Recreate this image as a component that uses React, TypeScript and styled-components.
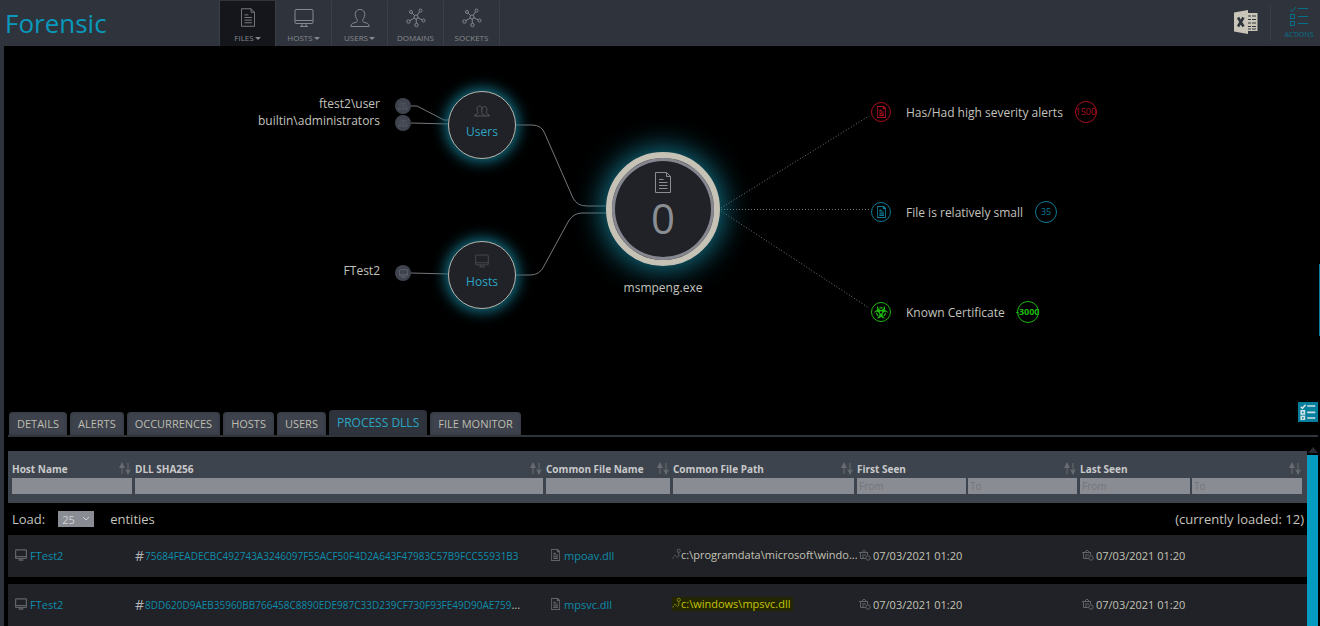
import React from 'react';
import styled, { createGlobalStyle, css } from 'styled-components';
import { FaBiohazard } from 'react-icons/fa';

const GlobalStyle = createGlobalStyle`
  * { box-sizing: border-box; }
  body {
    margin: 0;
    background: #000;
    color: #c4c3be;
    font-family: 'Open Sans', 'Noto Sans', sans-serif;
    font-size: 11px;
    overflow: hidden;
  }
  button, input, select { font-family: inherit; border: 0; border-radius: 0; margin: 0; }
  a { text-decoration: none; }
`;

/* ---------- icons ---------- */

const Svg = styled.svg`
  display: block;
  flex: none;
  fill: none;
  stroke: currentColor;
`;

type IconProps = { w: number; h: number; weight?: number };

const FileIcon = ({ w, h, weight = 1 }: IconProps) => (
  <Svg width={w} height={h} viewBox="0 0 16 21" strokeWidth={weight} aria-hidden="true">
    <path d="M.5.5h11l4 4v16H.5z" />
    <path d="M11.500.5v4h4" />
    <path d="M4 7.500h4.500M4 10.500h8.500M4 13.500h8.500M4 16.500h8.500" />
  </Svg>
);

const MonitorIcon = ({ w, h, weight = 1 }: IconProps) => (
  <Svg width={w} height={h} viewBox="0 0 20 20" strokeWidth={weight} aria-hidden="true">
    <rect x="1" y="1.500" width="18" height="14" rx="1" />
    <path d="M1 12.500h18M8 15.500V18M12 15.500V18M6 18.500h8" />
  </Svg>
);

const UserIcon = ({ w, h }: IconProps) => (
  <Svg width={w} height={h} viewBox="0 0 20 20" aria-hidden="true">
    <path d="M1 18.500c0-2 .6-2.800 2.300-3.400 2.400-.8 4.200-1 4.200-2.400 0-1-.8-1.200-1.500-2.900C4.300 5.500 5.800 1.500 10 1.500s5.700 4 4 8.300c-.7 1.700-1.500 1.900-1.500 2.900 0 1.400 1.800 1.600 4.200 2.400 1.700.6 2.300 1.400 2.300 3.400z" />
  </Svg>
);

const UsersIcon = ({ w, h }: IconProps) => (
  <Svg width={w} height={h} viewBox="0 0 16 13" aria-hidden="true">
    <path d="M.5 11.500c0-2 3.500-1.500 3.500-3.500 0-1-1-1.500-1-3.500C3 2.500 4 1.500 5.500 1.500S8 2.500 8 4.500L7.500 8c0 2 3 1.500 3 3.500z" />
    <path d="M8 5c0-2 1.200-3 2.700-3S13 3.200 13 5c0 1.600-.9 2.300-.9 3.200 0 1.500 3.400 1.300 3.400 3.300h-5" />
  </Svg>
);

const NetworkIcon = ({ w, h }: IconProps) => (
  <Svg width={w} height={h} viewBox="0 0 20 20" aria-hidden="true">
    <circle cx="10" cy="9" r="2" />
    <circle cx="5" cy="4" r="1.500" />
    <circle cx="14.500" cy="2.500" r="1.500" />
    <circle cx="2.500" cy="13.500" r="1.700" />
    <circle cx="17.500" cy="12.500" r="1.500" />
    <circle cx="10.500" cy="17" r="1.700" />
    <path d="M6.200 5.200l2.300 2.300M13.600 3.800l-2.400 3.500M4 12.600l4.200-2.500M16.200 11.900L12 9.800M10.400 15.200L10.200 11" />
  </Svg>
);

const ChecklistIcon = ({ w, h, weight = 1 }: IconProps) => (
  <Svg width={w} height={h} viewBox="0 0 20 20" strokeWidth={weight} aria-hidden="true">
    <path d="M1 3.500l2 2 4-4.500M9 2.500h10M9 10.500h10M9 17.500h10" />
    <rect x="1.500" y="8.500" width="4" height="4" />
    <rect x="1.500" y="15.500" width="4" height="4" />
  </Svg>
);

const ExcelIcon = () => (
  <Svg width="24" height="24" viewBox="0 0 24 24" aria-hidden="true">
    <path d="M14 3h9.500v18H14z" fill="#c9c6b9" stroke="none" />
    <path d="M14 6h8M14 9.500h8M14 13h8M14 16.500h8M14 19h8" stroke="#2f343c" strokeWidth="1.200" />
    <path d="M17.500 5v15" stroke="#c9c6b9" />
    <path d="M0 2.500L14 0v24L0 21.500z" fill="#c9c6b9" stroke="none" />
    <path d="M4 7.500l5.500 9M9.500 7.500l-5.500 9" stroke="#2f343c" strokeWidth="2.600" />
  </Svg>
);

const SortIcon = () => (
  <Svg width="12" height="13" viewBox="0 0 12 13" aria-hidden="true">
    <path d="M3 12V4M9 1v8" />
    <path d="M3 0l3 6H0zM9 13l3-6-3 1.500L6 7z" fill="currentColor" stroke="none" />
  </Svg>
);

const PathIcon = () => (
  <Svg width="9" height="12" viewBox="0 0 10 12" aria-hidden="true">
    <circle cx="7.500" cy="2.500" r="1.800" />
    <path d="M7.500 4.500v4c0 1.600-2 2-2.500.5S3 7 2 8.500L1 11" strokeDasharray="5 1" />
  </Svg>
);

const CalendarIcon = () => (
  <Svg width="12" height="12" viewBox="0 0 12 12" aria-hidden="true">
    <path d="M3 3l2-2 2 2M0 3.500h9M1.500 4v5.500h5M3 6h4M3 8h2M8.500 4v2" />
    <circle cx="9" cy="9" r="2.200" />
  </Svg>
);

/* ---------- top bar ---------- */

const Header = styled.header`
  display: flex;
  align-items: stretch;
  height: 46px;
  background: #2f343c;
`;

const Title = styled.h1`
  width: 219px;
  margin: 0;
  padding-left: 5px;
  color: #0899bd;
  font-size: 26px;
  font-weight: 400;
  line-height: 47px;
`;

const Nav = styled.nav`
  display: flex;
  flex: 1;
  padding-top: 1px;
  border-left: 1px solid #3a3f47;
`;

const NavButton = styled.button<{ $active?: boolean }>`
  display: flex;
  flex-direction: column;
  align-items: center;
  justify-content: space-between;
  width: 56px;
  padding: 7px 0 2px;
  border-right: 1px solid #3a3f47;
  background: ${(p) => (p.$active ? '#15161b' : 'transparent')};
  color: #85888e;
  font-size: 8px;
  line-height: 12px;
`;

const NavLabel = styled.span`
  display: flex;
  align-items: center;
  gap: 1px;
`;

const Caret = styled.span`
  border: 3px solid transparent;
  border-top-color: currentColor;
  border-bottom: 0;
`;

const HeaderTools = styled.div`
  display: flex;
  align-items: center;
`;

const ExportButton = styled.button`
  padding: 0 12px 2px;
  background: transparent;
  border-right: 1px solid #3a3f47;
  height: 36px;
`;

const ActionsButton = styled.button`
  display: flex;
  flex-direction: column;
  align-items: center;
  gap: 4px;
  width: 49px;
  padding: 0 0 0 7px;
  background: transparent;
  color: #06708b;
  font-size: 7px;
  line-height: 10px;
`;

/* ---------- graph ---------- */

const Main = styled.main`
  position: relative;
  border-left: 4px solid #2f343c;
`;

const Graph = styled.section`
  display: flex;
  justify-content: center;
  height: 356px;
`;

const Stage = styled.div`
  position: relative;
  flex: none;
  width: 900px;
  font-size: 12px;
  line-height: 18px;
  white-space: nowrap;
`;

const Links = styled.svg`
  position: absolute;
  inset: 0;
  width: 100%;
  height: 100%;
  fill: none;
  stroke: #74777c;
`;

type Point = { $x: number; $y: number };

const at = css<Point>`
  position: absolute;
  left: ${(p) => p.$x}px;
  top: ${(p) => p.$y}px;
`;

const GroupNode = styled.div<Point>`
  ${at}
  display: flex;
  flex-direction: column;
  align-items: center;
  gap: 5px;
  width: 68px;
  height: 68px;
  padding-top: 12px;
  margin: -34px;
  border: 1px solid #b9b4ad;
  border-radius: 50%;
  background: #202227;
  box-shadow: 0 0 14px 3px #137287;
  color: #54565b;
`;

const GroupName = styled.span`
  color: #2ba5c4;
`;

const FileNode = styled.div<Point>`
  ${at}
  display: flex;
  flex-direction: column;
  align-items: center;
  width: 114px;
  height: 114px;
  margin: -57px;
  padding-top: 14px;
  border: 6px solid #c6c3b6;
  border-radius: 50%;
  background: #202227;
  box-shadow: inset 0 0 0 3px #85868f, 0 0 28px 4px #137287;
  color: #8a8d92;
`;

const Score = styled.span`
  font-size: 42px;
  line-height: 50px;
`;

const FileName = styled.div<Point>`
  ${at}
  width: 160px;
  margin: -9px -80px;
  text-align: center;
`;

const Leaf = styled.div<Point>`
  ${at}
  width: 180px;
  margin: -9px 0 0 -180px;
  text-align: right;
`;

const LeafDot = styled.span<Point>`
  ${at}
  display: flex;
  align-items: center;
  justify-content: center;
  width: 16px;
  height: 16px;
  margin: -8px;
  border-radius: 50%;
  background: #3e434e;
  color: #5d626d;
`;

const Finding = styled.div<Point & { $color: string }>`
  ${at}
  display: flex;
  align-items: center;
  margin-top: -11px;
  height: 22px;
  color: ${(p) => p.$color};
`;

const FindingIcon = styled.span`
  display: flex;
  align-items: center;
  justify-content: center;
  width: 20px;
  height: 20px;
  border: 1px solid currentColor;
  border-radius: 50%;
`;

const FindingText = styled.span`
  padding: 2px 12px 0 15px;
  color: #c4c3be;
`;

const Points = styled.span<{ $bold?: boolean }>`
  display: flex;
  align-items: center;
  justify-content: center;
  width: 22px;
  height: 22px;
  border: 1px solid currentColor;
  border-radius: 50%;
  font-size: 9px;
  font-weight: ${(p) => (p.$bold ? 700 : 400)};
`;

const DrawerHandle = styled.span`
  position: absolute;
  top: 218px;
  right: 0;
  width: 1px;
  height: 72px;
  background: #0a7d9a;
`;

/* ---------- tabs ---------- */

const TabBar = styled.div`
  display: flex;
  align-items: flex-end;
  justify-content: space-between;
  height: 35px;
  margin: 0 2px 14px 4px;
  border-bottom: 2px solid #2f343a;
`;

const TabList = styled.div`
  display: flex;
  align-items: flex-end;
  gap: 3px;
  padding-left: 1px;
`;

const Tab = styled.button<{ $active?: boolean }>`
  height: ${(p) => (p.$active ? 25 : 23)}px;
  padding: 0 8px;
  border-radius: 4px 4px 0 0;
  background: ${(p) => (p.$active ? '#2f343c' : '#3d424c')};
  box-shadow: inset 0 0 3px ${(p) => (p.$active ? '#2b3038' : '#2f343c')};
  color: ${(p) => (p.$active ? '#2ba5c4' : '#bfbdb0')};
  font-size: ${(p) => (p.$active ? 12 : 11)}px;
  white-space: nowrap;
`;

const PanelButton = styled.button`
  display: flex;
  align-items: center;
  justify-content: center;
  align-self: flex-start;
  width: 20px;
  height: 20px;
  padding: 0;
  background: #067f9c;
  color: #d0e2e6;
`;

/* ---------- table ---------- */

const TableArea = styled.section`
  display: flex;
  margin: 0 2px 0 4px;
`;

const Table = styled.table`
  flex: 1;
  min-width: 0;
  width: 100%;
  table-layout: fixed;
  border-spacing: 0;
`;

const Col = styled.col<{ $w?: number }>`
  width: ${(p) => (p.$w ? `${p.$w}px` : 'auto')};
`;

const HeadCell = styled.th`
  height: 52px;
  padding: 8px 0 8px 3px;
  background: #3e444d;
  color: #c8c9cb;
  font-size: 10px;
  font-weight: 700;
  text-align: left;
  vertical-align: top;
  &:first-child { padding-left: 4px; }
  &:last-child { padding-right: 5px; }
`;

const HeadTitle = styled.div`
  display: flex;
  align-items: center;
  justify-content: space-between;
  height: 19px;
  white-space: nowrap;
`;

const SortButton = styled.button`
  padding: 0 1px 1px 0;
  background: transparent;
  color: #686b71;
`;

const Filters = styled.div`
  display: flex;
  gap: 2px;
`;

const FilterInput = styled.input`
  flex: 1;
  min-width: 0;
  height: 16px;
  padding: 0 2px;
  background: #8a8c93;
  color: #202227;
  font-size: 10px;
  &::placeholder { color: #73767a; opacity: 1; }
`;

const LoadCell = styled.td`
  height: 32px;
  padding: 0 3px 0 4px;
  font-size: 13px;
`;

const LoadRow = styled.div`
  display: flex;
  align-items: center;
`;

const SelectWrap = styled.span`
  position: relative;
  display: flex;
  margin: 0 16px 0 13px;
`;

const Select = styled.select`
  width: 36px;
  height: 16px;
  padding: 0 4px;
  appearance: none;
  background: #8a8c93;
  color: #d0d1d3;
  font-size: 11px;
`;

const Chevron = styled(Svg)`
  position: absolute;
  top: 5px;
  right: 4px;
  color: #d0d1d3;
  pointer-events: none;
`;

const LoadedCount = styled.span`
  margin-left: auto;
`;

const Cell = styled.td`
  height: 49px;
  padding: 0 0 2px 3px;
  border-bottom: 7px solid #000;
  background: #202227;
`;

const CellContent = styled.div<{ $indent?: number; $gap?: number }>`
  display: flex;
  align-items: center;
  gap: ${(p) => p.$gap ?? 0}px;
  height: 20px;
  padding-left: ${(p) => p.$indent ?? 0}px;
  color: #606368;
`;

const CellText = styled.span`
  color: #c4c3b6;
  white-space: nowrap;
`;

const CellLink = styled.a<{ $small?: boolean }>`
  color: #0f8caa;
  font-size: ${(p) => (p.$small ? 10 : 11)}px;
`;

const Hash = styled.span`
  padding-right: 1px;
  color: #b4b5b8;
  font-size: 14px;
`;

const PathBox = styled.span`
  display: flex;
  margin-left: -1px;
  padding-right: 3px;
  line-height: 14px;
`;

const Marked = styled(PathBox)`
  background: #242600;
  color: #8c8d10;
  & > ${CellText} { color: #c3c40c; }
`;

const ScrollTrack = styled.div`
  display: flex;
  flex-direction: column;
  align-items: center;
  width: 11px;
`;

const ScrollArrow = styled.span`
  margin: -4px 0 1px;
  border: 5px solid transparent;
  border-top: 0;
  border-bottom: 6px solid #2a2d33;
`;

const ScrollThumb = styled.div`
  flex: 1;
  width: 100%;
  margin-top: 1px;
  background: #069bc0;
`;

/* ---------- data ---------- */

const navItems = [
  { label: 'FILES', icon: <FileIcon w={14} h={19} />, menu: true, active: true },
  { label: 'HOSTS', icon: <MonitorIcon w={20} h={20} />, menu: true },
  { label: 'USERS', icon: <UserIcon w={20} h={20} />, menu: true },
  { label: 'DOMAINS', icon: <NetworkIcon w={20} h={20} /> },
  { label: 'SOCKETS', icon: <NetworkIcon w={20} h={20} /> },
];

const tabs = ['DETAILS', 'ALERTS', 'OCCURRENCES', 'HOSTS', 'USERS', 'PROCESS DLLS', 'FILE MONITOR'];

const columns = [
  { title: 'Host Name', width: 124 },
  { title: 'DLL SHA256' },
  { title: 'Common File Name', width: 127 },
  { title: 'Common File Path', width: 184 },
  { title: 'First Seen', width: 223, range: true },
  { title: 'Last Seen', width: 230, range: true },
];

const rows = [
  {
    host: 'FTest2',
    sha: '75684FEADECBC492743A3246097F55ACF50F4D2A643F47983C57B9FCC55931B3',
    name: 'mpoav.dll',
    path: 'c:\\programdata\\microsoft\\windo...',
    first: '07/03/2021 01:20',
    last: '07/03/2021 01:20',
  },
  {
    host: 'FTest2',
    sha: '8DD620D9AEB35960BB766458C8890EDE987C33D239CF730F93FE49D90AE759',
    more: true,
    name: 'mpsvc.dll',
    path: 'c:\\windows\\mpsvc.dll',
    marked: true,
    first: '07/03/2021 01:20',
    last: '07/03/2021 01:20',
  },
];

export default function App() {
  return (
    <>
      <GlobalStyle />
      <Header>
        <Title>Forensic</Title>
        <Nav>
          {navItems.map((item) => (
            <NavButton key={item.label} $active={item.active}>
              {item.icon}
              <NavLabel>
                {item.label}
                {item.menu && <Caret />}
              </NavLabel>
            </NavButton>
          ))}
        </Nav>
        <HeaderTools>
          <ExportButton aria-label="Export to Excel">
            <ExcelIcon />
          </ExportButton>
          <ActionsButton>
            <ChecklistIcon w={20} h={20} />
            ACTIONS
          </ActionsButton>
        </HeaderTools>
      </Header>

      <Main>
        <Graph>
          <Stage>
            <Links>
              <path d="M199 60h6l27 14h6M199 77l38 1M199 227l38 1" />
              <path d="M304 79h16q10 0 13 9l28 64q4 8 14 8h20" />
              <path d="M304 229h14q10 0 14-9l24-44q5-9 14-9h25" />
              <path
                d="M509 162L657 70M509 163.500H657M509 165L657 262"
                strokeDasharray="1 2"
              />
            </Links>

            <Leaf $x={168} $y={58}>ftest2\user</Leaf>
            <Leaf $x={168} $y={75}>builtin\administrators</Leaf>
            <Leaf $x={168} $y={225}>FTest2</Leaf>
            <LeafDot $x={191} $y={60}><UsersIcon w={10} h={8} /></LeafDot>
            <LeafDot $x={191} $y={77}><UsersIcon w={10} h={8} /></LeafDot>
            <LeafDot $x={191} $y={227}><MonitorIcon w={9} h={9} weight={2} /></LeafDot>

            <GroupNode $x={270} $y={79}>
              <UsersIcon w={16} h={14} />
              <GroupName>Users</GroupName>
            </GroupNode>
            <GroupNode $x={270} $y={229}>
              <MonitorIcon w={16} h={14} />
              <GroupName>Hosts</GroupName>
            </GroupNode>

            <FileNode $x={451} $y={163}>
              <FileIcon w={16} h={21} />
              <Score>0</Score>
            </FileNode>
            <FileName $x={451} $y={242}>msmpeng.exe</FileName>

            <Finding $x={659} $y={66} $color="#a80f20">
              <FindingIcon><FileIcon w={9} h={12} weight={2} /></FindingIcon>
              <FindingText>Has/Had high severity alerts</FindingText>
              <Points>1500</Points>
            </Finding>
            <Finding $x={659} $y={166} $color="#0f7a96">
              <FindingIcon><FileIcon w={9} h={12} weight={2} /></FindingIcon>
              <FindingText>File is relatively small</FindingText>
              <Points>35</Points>
            </Finding>
            <Finding $x={659} $y={266} $color="#1fb80f">
              <FindingIcon><FaBiohazard size={14} aria-hidden="true" /></FindingIcon>
              <FindingText>Known Certificate</FindingText>
              <Points $bold>-3000</Points>
            </Finding>
          </Stage>
        </Graph>
        <DrawerHandle />

        <TabBar>
          <TabList role="tablist">
            {tabs.map((tab) => (
              <Tab
                key={tab}
                role="tab"
                aria-selected={tab === 'PROCESS DLLS'}
                $active={tab === 'PROCESS DLLS'}
              >
                {tab}
              </Tab>
            ))}
          </TabList>
          <PanelButton aria-label="Show actions panel">
            <ChecklistIcon w={16} h={16} weight={2} />
          </PanelButton>
        </TabBar>

        <TableArea>
          <Table>
            <colgroup>
              {columns.map((c) => (
                <Col key={c.title} $w={c.width} />
              ))}
            </colgroup>
            <thead>
              <tr>
                {columns.map((c) => (
                  <HeadCell key={c.title} scope="col">
                    <HeadTitle>
                      {c.title}
                      <SortButton aria-label={`Sort by ${c.title}`}>
                        <SortIcon />
                      </SortButton>
                    </HeadTitle>
                    <Filters>
                      {c.range ? (
                        <>
                          <FilterInput placeholder="From" aria-label={`${c.title} from`} />
                          <FilterInput placeholder="To" aria-label={`${c.title} to`} />
                        </>
                      ) : (
                        <FilterInput aria-label={`Filter ${c.title}`} />
                      )}
                    </Filters>
                  </HeadCell>
                ))}
              </tr>
            </thead>
            <tbody>
              <tr>
                <LoadCell colSpan={6}>
                  <LoadRow>
                    <label htmlFor="page-size">Load:</label>
                    <SelectWrap>
                      <Select id="page-size" defaultValue="25">
                        <option>25</option>
                      </Select>
                      <Chevron width="8" height="6" viewBox="0 0 8 6">
                        <path d="M1 1l3 3 3-3" />
                      </Chevron>
                    </SelectWrap>
                    <span>entities</span>
                    <LoadedCount>(currently loaded: 12)</LoadedCount>
                  </LoadRow>
                </LoadCell>
              </tr>
              {rows.map((row) => (
                <tr key={row.sha}>
                  <Cell>
                    <CellContent $indent={4} $gap={3}>
                      <MonitorIcon w={12} h={12} weight={2} />
                      <CellLink href="#host">{row.host}</CellLink>
                    </CellContent>
                  </Cell>
                  <Cell>
                    <CellContent>
                      <Hash>#</Hash>
                      <CellText>
                        <CellLink href="#hash" $small>{row.sha}</CellLink>
                        {row.more && '...'}
                      </CellText>
                    </CellContent>
                  </Cell>
                  <Cell>
                    <CellContent $indent={5} $gap={4}>
                      <FileIcon w={9} h={12} weight={2} />
                      <CellLink href="#file">{row.name}</CellLink>
                    </CellContent>
                  </Cell>
                  <Cell>
                    <CellContent>
                      <PathBox as={row.marked ? Marked : undefined}>
                        <PathIcon />
                        <CellText>{row.path}</CellText>
                      </PathBox>
                    </CellContent>
                  </Cell>
                  <Cell>
                    <CellContent $indent={2} $gap={2}>
                      <CalendarIcon />
                      <CellText>{row.first}</CellText>
                    </CellContent>
                  </Cell>
                  <Cell>
                    <CellContent $indent={2} $gap={2}>
                      <CalendarIcon />
                      <CellText>{row.last}</CellText>
                    </CellContent>
                  </Cell>
                </tr>
              ))}
            </tbody>
          </Table>
          <ScrollTrack>
            <ScrollArrow />
            <ScrollThumb />
          </ScrollTrack>
        </TableArea>
      </Main>
    </>
  );
}
